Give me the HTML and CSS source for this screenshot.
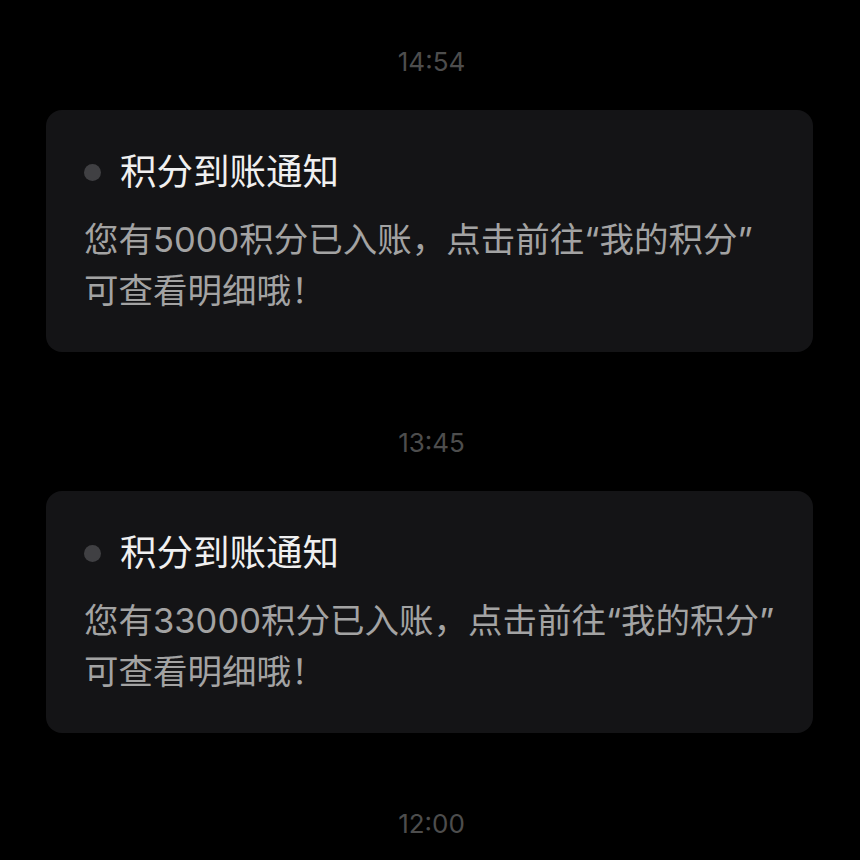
FILE: index.html
```html
<!DOCTYPE html>
<html lang="zh-CN">
<head>
  <meta charset="UTF-8">
  <title>消息通知</title>
  <link rel="stylesheet" href="styles.css">
</head>
<body>
  <div class="list">
    <div class="item">
      <div class="time">14:54</div>
      <div class="card">
        <div class="title"><span class="dot"></span>积分到账通知</div>
        <div class="text">您有5000积分已入账，点击前往“我的积分”<br>可查看明细哦！</div>
      </div>
    </div>

    <div class="item">
      <div class="time">13:45</div>
      <div class="card">
        <div class="title"><span class="dot"></span>积分到账通知</div>
        <div class="text">您有33000积分已入账，点击前往“我的积分”<br>可查看明细哦！</div>
      </div>
    </div>

    <div class="item">
      <div class="time">12:00</div>
    </div>
  </div>
</body>
</html>
```

FILE: styles.css
```css
body {
  margin: 0;
  background: #000;
  font-family: Inter, "Noto Sans CJK SC", sans-serif;
}

.list {
  padding: 42px 47px 16px 46px;
}

.item {
  margin-bottom: 71px;
}

.item:last-child {
  margin-bottom: 0;
}

.time {
  font-size: 26px;
  line-height: 40px;
  color: #4d4d4d;
  text-align: center;
  margin-bottom: 28px;
  padding-left: 4px;
}

.card {
  background: #141416;
  border-radius: 16px;
  padding: 37px 10px 35px 38px;
  height: 242px;
  box-sizing: border-box;
}

.title {
  display: flex;
  align-items: center;
  font-size: 36.5px;
  line-height: 50px;
  color: #f0f0f0;
  margin-bottom: 17px;
}

.dot {
  width: 17px;
  height: 17px;
  border-radius: 50%;
  background: #404043;
  margin-right: 19px;
}

.text {
  font-size: 34.5px;
  line-height: 51px;
  color: #a3a3a3;
  white-space: nowrap;
}
```
